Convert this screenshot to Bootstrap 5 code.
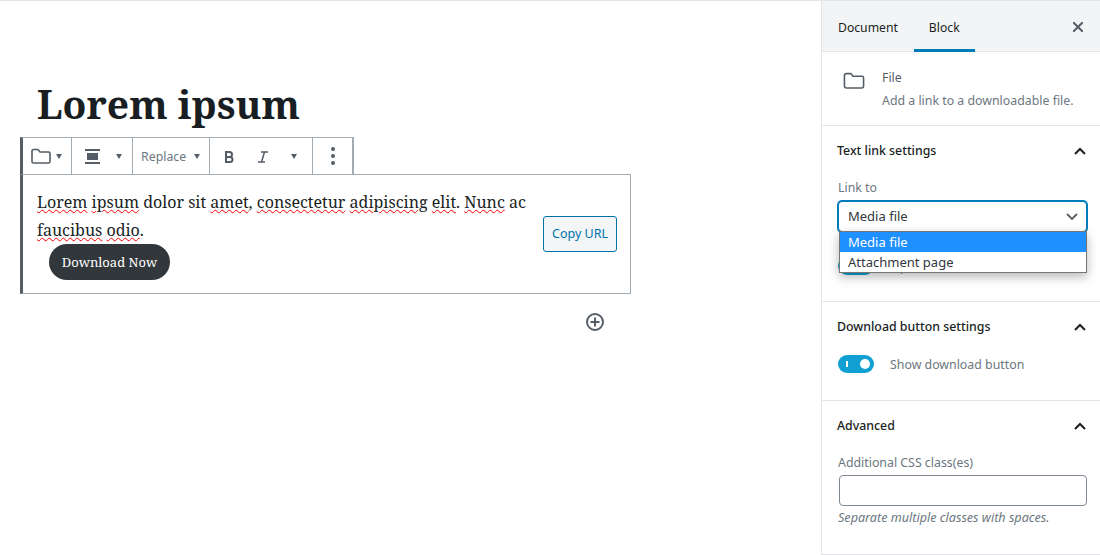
<!DOCTYPE html>
<html lang="en">
<head>
  <meta charset="UTF-8">
  <title>Edit Post</title>
  <link rel="stylesheet" href="https://cdn.jsdelivr.net/npm/bootstrap@5.3.0/dist/css/bootstrap.min.css">
  <style>
    html, body { height: 555px; overflow: hidden; }
    body { font-family: "Noto Sans", "Open Sans", sans-serif; font-size: 12.35px; color: #191e23; background: #fff; }
    .app-shell { height: 555px; border-top: 1px solid #e2e4e7; }
    .editor-area { width: 821px; flex: none; padding: 0 0 0 20px; }
    .post-title { font-family: "Noto Serif", "DejaVu Serif Condensed", "DejaVu Serif", serif; font-weight: 700; font-size: 39px; line-height: 1; color: #191e23; margin: 83px 0 12px 17px; height: 41px; }
    .block-bar { height: 37px; width: 334px; border: 1px solid #a2aab2; border-left: 3px solid #555d66; border-bottom: 0; background: #fff; }
    .bar-group { height: 100%; border-right: 1px solid #a2aab2; color: #555d66; }
    .bar-text { font-size: 12.35px; color: #6c7781; padding-top: 3px; }
    .bar-glyph { margin-top: 2px; }
    .caret-down { width: 0; height: 0; border-left: 3.5px solid transparent; border-right: 3.5px solid transparent; border-top: 5px solid #555d66; }
    .block-box { position: relative; width: 611px; height: 120px; border: 1px solid #a2aab2; border-left: 3px solid #555d66; padding: 13px 13px 0 14px; }
    .block-text { font-family: "Noto Serif", "DejaVu Serif Condensed", "DejaVu Serif", serif; font-size: 16px; line-height: 28px; width: 495px; color: #191e23; margin: 0; }
    .spell { text-decoration: underline wavy #f00 1px; text-underline-offset: 1px; }
    .download-pill { font-family: "Noto Serif", "DejaVu Serif Condensed", "DejaVu Serif", serif; font-size: 13px; background: #32373c; color: #fff; border: 0; border-radius: 18px; width: 121px; height: 36px; margin-left: 12px; display: block; padding: 2px 0 0; }
    .copy-url { font-size: 12.5px; color: #0073aa; background: #f3f5f6; border: 1px solid #0073aa; border-radius: 3px; width: 74px; height: 36px; padding: 0; margin-top: 28px; }
    .add-row { width: 611px; padding-right: 26px; margin-top: 18px; }
    .side-panel { width: 279px; flex: none; height: 554px; border-left: 1px solid #e2e4e7; border-bottom: 1px solid #e2e4e7; }
    .side-tabs { height: 51px; background: #f3f4f5; border-bottom: 1px solid #e2e4e7; }
    .side-tab { height: 50px; line-height: 54px; padding: 0 16px; color: #191e23; font-size: 12.2px; }
    .side-tab.is-on { border-bottom: 3px solid #007cba; margin-bottom: -1px; height: 51px; padding: 0 15px; }
    .close-x { margin: 21px 17px 0 auto; }
    .side-info { height: 74px; border-bottom: 1px solid #e2e4e7; padding: 16px 16px 0 21px; }
    .info-icon { margin-top: 4px; }
    .info-title { color: #555d66; line-height: 20px; margin-bottom: 3px; }
    .info-sub { color: #6c7781; line-height: 20px; }
    .side-sec { border-bottom: 1px solid #e2e4e7; padding: 0 14px 0 15px; }
    .side-sec:last-child { border-bottom: 0; }
    .sec-head { height: 50px; font-weight: 500; color: #191e23; }
    .fld-label { color: #6c7781; line-height: 18px; margin: 3px 0 4px 1px; }
    .fld-label.tight { margin-bottom: 3px; }
    .select-wrap { position: relative; width: 249px; margin-left: 1px; }
    .select-face { height: 31px; border: 1px solid #007cba; box-shadow: 0 0 0 1px #007cba; border-radius: 4px; background: #fff; padding: 0 8px 0 9px; color: #32373c; font-size: 13px; }
    .select-list { position: absolute; left: 1px; right: 0; top: 30px; background: #fff; border: 1px solid #767676; box-shadow: 0 4px 10px rgba(0,0,0,.28); z-index: 5; font-size: 13px; line-height: 20px; color: #32373c; }
    .select-list div { padding: 0 8px; height: 20px; }
    .select-list .picked { background: #1e90ff; color: #fff; }
    .toggle-row { display: flex; align-items: center; margin-left: 1px; }
    .toggle-pill { position: relative; width: 36px; height: 18px; border-radius: 9px; background: #11a0d2; flex: none; }
    .toggle-pill::before { content: ""; position: absolute; left: 8px; top: 6px; width: 2px; height: 6px; background: #fff; }
    .toggle-pill::after { content: ""; position: absolute; right: 4px; top: 4px; width: 10px; height: 10px; border-radius: 50%; background: #fff; }
    .toggle-text { color: #6c7781; margin-left: 16px; padding-top: 2px; }
    .text-field { display: block; width: 248px; height: 31px; margin-left: 2px; border: 1px solid #7e8993; border-radius: 4px; background: #fff; }
    .fld-help { font-style: italic; font-size: 12.6px; color: #6c7781; line-height: 18px; margin: 3px 0 0 1px; }
  </style>
</head>
<body>
  <div class="app-shell d-flex">
    <!-- editor -->
    <div class="editor-area">
      <h1 class="post-title">Lorem ipsum</h1>

      <div class="block-bar d-flex">
        <div class="bar-group d-flex align-items-center" style="width:49px">
          <svg class="ms-2" width="20" height="16" viewBox="0 0 20 16" fill="none" stroke="#555d66" stroke-width="1.6"><path d="M1 3a1.500 1.500 0 0 1 1.500-1.500h4.500l2 2.500h8.500a1.500 1.500 0 0 1 1.500 1.500v8a1.500 1.500 0 0 1-1.500 1.500h-15a1.500 1.500 0 0 1-1.500-1.500z"/></svg>
          <span class="caret-down" style="margin-left:5px"></span>
        </div>
        <div class="bar-group d-flex align-items-center" style="width:61px">
          <svg style="margin-left:13px" width="15" height="15" viewBox="0 0 15 15" fill="#555d66"><rect x="0" y="0" width="15" height="2"/><rect x="2" y="4" width="11" height="7"/><rect x="0" y="13" width="15" height="2"/></svg>
          <span class="caret-down ms-auto" style="margin-right:10px"></span>
        </div>
        <div class="bar-group d-flex align-items-center" style="width:77px">
          <span class="bar-text ms-2">Replace</span>
          <span class="caret-down ms-2"></span>
        </div>
        <div class="bar-group d-flex align-items-center" style="width:103px">
          <svg class="bar-glyph" style="margin-left:14px" width="10" height="12" viewBox="0 0 10 12" fill="none" stroke="#555d66" stroke-width="2"><path d="M2 1v10M1 1h4.500a2.500 2.500 0 0 1 0 5H2h4a2.500 2.500 0 0 1 0 5H1"/></svg>
          <svg class="bar-glyph" style="margin-left:24px" width="10" height="12" viewBox="0 0 10 12" fill="none" stroke="#555d66" stroke-width="1.500"><path d="M3 1h7M0 11h7M6.500 1L3.500 11"/></svg>
          <span class="caret-down ms-auto" style="margin-right:15px"></span>
        </div>
        <div class="bar-group d-flex align-items-center justify-content-center" style="width:40px">
          <svg width="4" height="18" viewBox="0 0 4 18" fill="#555d66"><circle cx="2" cy="2" r="2"/><circle cx="2" cy="9" r="2"/><circle cx="2" cy="16" r="2"/></svg>
        </div>
      </div>

      <div class="block-box d-flex justify-content-between align-items-start">
        <div>
          <p class="block-text"><span class="spell">Lorem</span> <span class="spell">ipsum</span> dolor sit <span class="spell">amet</span>, <span class="spell">consectetur</span> <span class="spell">adipiscing</span> <span class="spell">elit</span>. <span class="spell">Nunc</span> ac <span class="spell">faucibus</span> <span class="spell">odio</span>.</p>
          <button class="download-pill">Download Now</button>
        </div>
        <button class="copy-url">Copy URL</button>
      </div>

      <div class="add-row d-flex justify-content-end">
        <svg width="20" height="20" viewBox="0 0 20 20" fill="none" stroke="#555d66" stroke-width="2"><circle cx="10" cy="10" r="8"/><path d="M10 5.500v9M5.500 10h9"/></svg>
      </div>
    </div>

    <!-- sidebar -->
    <div class="side-panel">
      <div class="side-tabs d-flex align-items-start">
        <div class="side-tab">Document</div>
        <div class="side-tab is-on">Block</div>
        <svg class="close-x" width="10" height="10" viewBox="0 0 10 10" stroke="#555d66" stroke-width="2"><path d="M0 0l10 10M10 0L0 10"/></svg>
      </div>

      <div class="side-info d-flex">
        <svg class="info-icon" width="22" height="17" viewBox="0 0 20 16" fill="none" stroke="#555d66" stroke-width="1.500"><path d="M1 3a1.500 1.500 0 0 1 1.500-1.500h4.500l2 2.500h8.500a1.500 1.500 0 0 1 1.500 1.500v8a1.500 1.500 0 0 1-1.500 1.500h-15a1.500 1.500 0 0 1-1.500-1.500z"/></svg>
        <div style="margin-left:17px">
          <div class="info-title">File</div>
          <div class="info-sub">Add a link to a downloadable file.</div>
        </div>
      </div>

      <div class="side-sec" style="height:176px">
        <div class="sec-head d-flex align-items-center justify-content-between">
          <span>Text link settings</span>
          <svg width="12" height="8" viewBox="0 0 12 8" fill="none" stroke="#191e23" stroke-width="2"><path d="M1 7l5-5 5 5"/></svg>
        </div>
        <div class="fld-label">Link to</div>
        <div class="select-wrap">
          <div class="select-face d-flex align-items-center justify-content-between">
            <span>Media file</span>
            <svg width="12" height="8" viewBox="0 0 12 8" fill="none" stroke="#555d66" stroke-width="1.800"><path d="M1 1l5 5 5-5"/></svg>
          </div>
          <div class="select-list">
            <div class="picked">Media file</div>
            <div>Attachment page</div>
          </div>
        </div>
        <div class="toggle-row" style="margin-top:24px">
          <span class="toggle-pill"></span>
          <span class="toggle-text">Open in new tab</span>
        </div>
      </div>

      <div class="side-sec" style="height:99px">
        <div class="sec-head d-flex align-items-center justify-content-between">
          <span>Download button settings</span>
          <svg width="12" height="8" viewBox="0 0 12 8" fill="none" stroke="#191e23" stroke-width="2"><path d="M1 7l5-5 5 5"/></svg>
        </div>
        <div class="toggle-row" style="margin-top:2px">
          <span class="toggle-pill"></span>
          <span class="toggle-text">Show download button</span>
        </div>
      </div>

      <div class="side-sec">
        <div class="sec-head d-flex align-items-center justify-content-between">
          <span>Advanced</span>
          <svg width="12" height="8" viewBox="0 0 12 8" fill="none" stroke="#191e23" stroke-width="2"><path d="M1 7l5-5 5 5"/></svg>
        </div>
        <div class="fld-label tight">Additional CSS class(es)</div>
        <input class="text-field" type="text">
        <div class="fld-help">Separate multiple classes with spaces.</div>
      </div>
    </div>
  </div>
</body>
</html>
